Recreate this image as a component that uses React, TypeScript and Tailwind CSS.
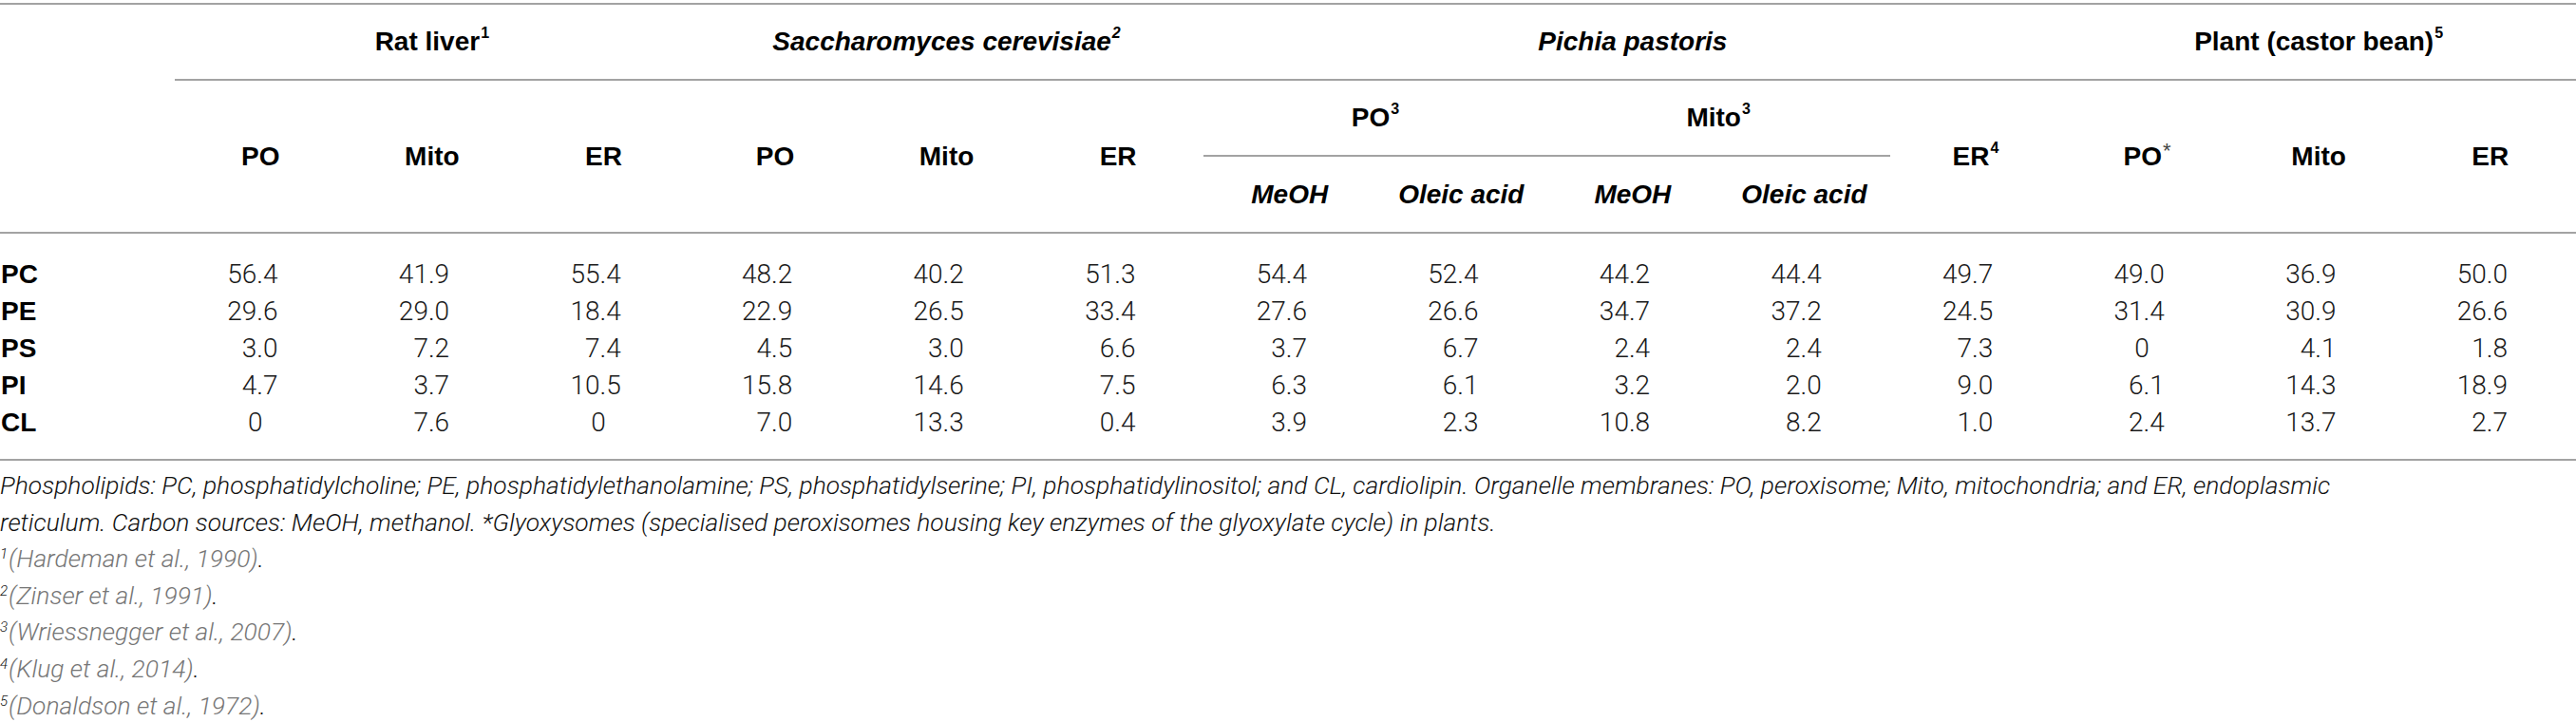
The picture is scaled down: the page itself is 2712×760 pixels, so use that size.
import React from "react";

const rows: [string, string[]][] = [
  ["PC", ["56.4", "41.9", "55.4", "48.2", "40.2", "51.3", "54.4", "52.4", "44.2", "44.4", "49.7", "49.0", "36.9", "50.0"]],
  ["PE", ["29.6", "29.0", "18.4", "22.9", "26.5", "33.4", "27.6", "26.6", "34.7", "37.2", "24.5", "31.4", "30.9", "26.6"]],
  ["PS", ["3.0", "7.2", "7.4", "4.5", "3.0", "6.6", "3.7", "6.7", "2.4", "2.4", "7.3", "0", "4.1", "1.8"]],
  ["PI", ["4.7", "3.7", "10.5", "15.8", "14.6", "7.5", "6.3", "6.1", "3.2", "2.0", "9.0", "6.1", "14.3", "18.9"]],
  ["CL", ["0", "7.6", "0", "7.0", "13.3", "0.4", "3.9", "2.3", "10.8", "8.2", "1.0", "2.4", "13.7", "2.7"]],
];

const Sup = ({ children }: { children: React.ReactNode }) => (
  <span className="relative top-[-9px] text-[16px] leading-none ml-[1px]">{children}</span>
);

const Hd = ({ children, className = "" }: { children: React.ReactNode; className?: string }) => (
  <div className={"flex items-center justify-center font-bold whitespace-nowrap " + className}>{children}</div>
);

const Ref = ({ n, text }: { n: string; text: string }) => (
  <div className="whitespace-nowrap">
    <span className="relative top-[-9px] text-[15px] leading-none mr-[1px]">{n}</span>
    <span className="text-[#767676]">{text}</span>.
  </div>
);

export default function App() {
  return (
    <div className="w-[2712px] h-[760px] overflow-hidden bg-white pt-[3px] text-black font-['Liberation_Sans',Arial,sans-serif]">
      <div className="grid grid-cols-[184px_repeat(14,minmax(0,1fr))] grid-rows-[80px_80px_79px] border-t-2 border-b-2 border-[#a3a3a3] text-[28px]">
        <div className="row-span-3" />
        <Hd className="col-span-3 border-b-2 border-[#a3a3a3]">
          Rat liver<Sup>1</Sup>
        </Hd>
        <Hd className="col-span-3 border-b-2 border-[#a3a3a3] italic">
          Saccharomyces cerevisiae<Sup>2</Sup>
        </Hd>
        <Hd className="col-span-5 border-b-2 border-[#a3a3a3] italic">Pichia pastoris</Hd>
        <Hd className="col-span-3 border-b-2 border-[#a3a3a3]">
          Plant (castor bean)<Sup>5</Sup>
        </Hd>

        <Hd className="row-span-2">PO</Hd>
        <Hd className="row-span-2">Mito</Hd>
        <Hd className="row-span-2">ER</Hd>
        <Hd className="row-span-2">PO</Hd>
        <Hd className="row-span-2">Mito</Hd>
        <Hd className="row-span-2">ER</Hd>
        <Hd className="col-span-2 border-b-2 border-[#a3a3a3]">
          PO<Sup>3</Sup>
        </Hd>
        <Hd className="col-span-2 border-b-2 border-[#a3a3a3]">
          Mito<Sup>3</Sup>
        </Hd>
        <Hd className="row-span-2">
          ER<Sup>4</Sup>
        </Hd>
        <Hd className="row-span-2">
          PO
          <span className="relative top-[-6px] text-[22px] font-normal text-[#444] leading-none ml-[1px]">*</span>
        </Hd>
        <Hd className="row-span-2">Mito</Hd>
        <Hd className="row-span-2">ER</Hd>

        <Hd className="italic">MeOH</Hd>
        <Hd className="italic">Oleic acid</Hd>
        <Hd className="italic">MeOH</Hd>
        <Hd className="italic">Oleic acid</Hd>
      </div>

      <div className="grid grid-cols-[184px_repeat(14,minmax(0,1fr))] auto-rows-[39px] pt-[23px] pb-[19px] border-b-2 border-[#a3a3a3]">
        {rows.map(([label, vals]) => (
          <React.Fragment key={label}>
            <div className="text-[28px] leading-[39px] font-bold pl-[1px]">{label}</div>
            {vals.map((v, i) => (
              <div
                key={i}
                className={
                  "text-right text-[28px] leading-[39px] font-light text-[#1a1a1a] font-['Roboto',sans-serif] " +
                  (v === "0" ? "pr-[88px]" : "pr-[72px]")
                }
              >
                {v}
              </div>
            ))}
          </React.Fragment>
        ))}
      </div>

      <div className="pt-[7px] text-[26.4px] leading-[38.6px] italic font-light font-['Roboto',sans-serif] text-[#111]">
        <div className="whitespace-nowrap">
          Phospholipids: PC, phosphatidylcholine; PE, phosphatidylethanolamine; PS, phosphatidylserine; PI, phosphatidylinositol; and CL, cardiolipin. Organelle membranes: PO, peroxisome; Mito, mitochondria; and ER, endoplasmic
        </div>
        <div className="whitespace-nowrap">
          reticulum. Carbon sources: MeOH, methanol. *Glyoxysomes (specialised peroxisomes housing key enzymes of the glyoxylate cycle) in plants.
        </div>
        <Ref n="1" text="(Hardeman et al., 1990)" />
        <Ref n="2" text="(Zinser et al., 1991)" />
        <Ref n="3" text="(Wriessnegger et al., 2007)" />
        <Ref n="4" text="(Klug et al., 2014)" />
        <Ref n="5" text="(Donaldson et al., 1972)" />
      </div>
    </div>
  );
}
